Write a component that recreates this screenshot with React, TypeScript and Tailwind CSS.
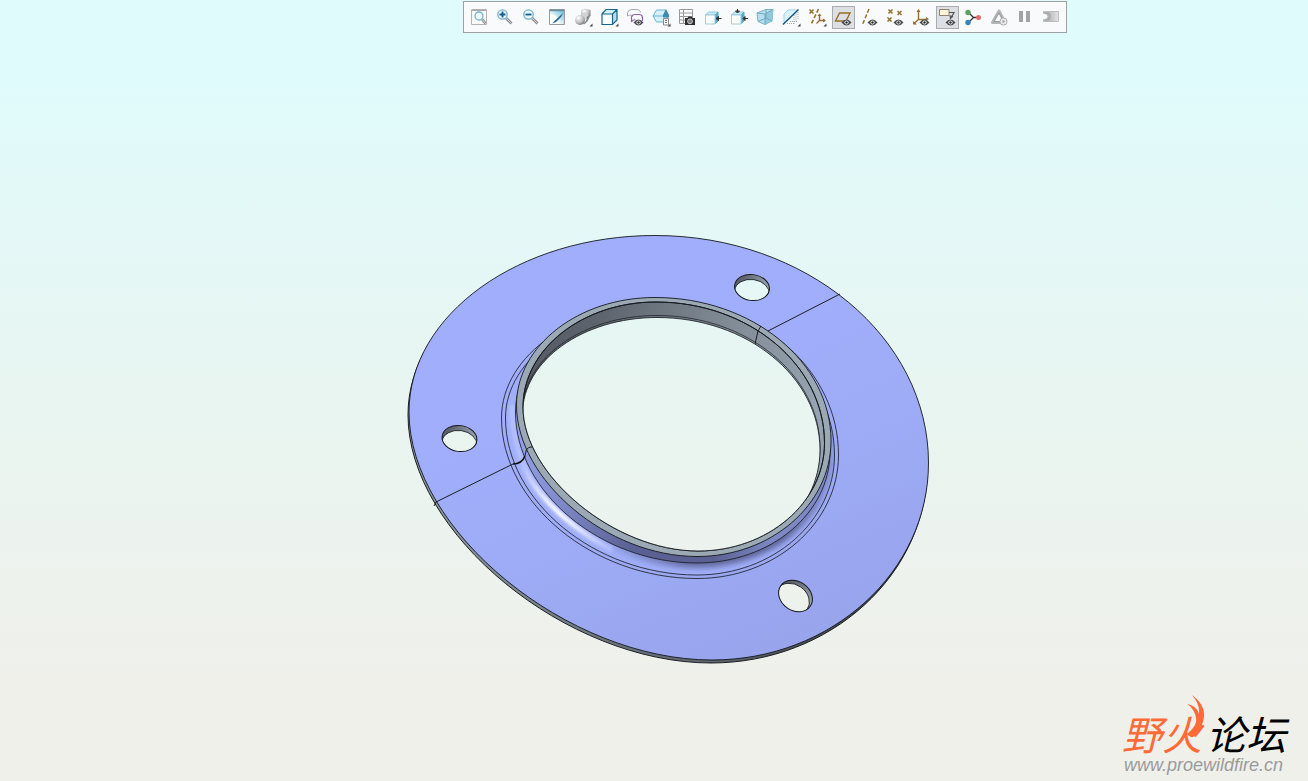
import { ReactNode } from 'react';
import clsx from 'clsx';

type Point = [number, number];

// Closed oval through its four extreme points. `flat` is the handle length
// of the lower left quadrant, the other three are regular quarter arcs.
const oval = (left: Point, top: Point, right: Point, bottom: Point, flat = 0.53) => {
  const k = 0.552;
  const [lx, ly] = left;
  const [tx, ty] = top;
  const [rx, ry] = right;
  const [bx, by] = bottom;
  return [
    `M${lx} ${ly}`,
    `C${lx} ${ly - k * (ly - ty)} ${tx - k * (tx - lx)} ${ty} ${tx} ${ty}`,
    `C${tx + k * (rx - tx)} ${ty} ${rx} ${ry - k * (ry - ty)} ${rx} ${ry}`,
    `C${rx} ${ry + k * (by - ry)} ${bx + k * (rx - bx)} ${by} ${bx} ${by}`,
    `C${bx - flat * (bx - lx)} ${by} ${lx} ${ly + flat * (by - ly)} ${lx} ${ly}Z`,
  ].join('');
};

const flange = oval([409, 412], [655, 235.5], [928.5, 463], [712, 660], 0.477);
const filletOuter = oval([501.5, 418], [668, 303], [838.5, 455], [697, 578.5]);
const filletInner = oval([505.5, 418], [664, 309], [834.5, 455], [697, 575]);
const collar = oval([515.5, 412], [657, 305], [830, 452], [697, 563]);
const rimOuter = oval([516.5, 405], [655, 297.5], [831, 441], [697, 556.5], 0.496);
const rimInner = oval([523, 407], [656, 302], [824.5, 443], [698, 551], 0.475);
const bore = oval([522.5, 414], [657, 317.5], [820, 450], [688, 562]);

const boltHoles = [
  { id: 'bolt-top', cx: 752, cy: 287.5, rx: 17.5, ry: 13, tilt: 8, dx: 0, dy: 5 },
  { id: 'bolt-left', cx: 459.5, cy: 438.5, rx: 17.5, ry: 13, tilt: 8, dx: 0, dy: 5 },
  { id: 'bolt-right', cx: 795.5, cy: 596, rx: 18, ry: 14.5, tilt: 35, dx: -3, dy: 3 },
];

const FlangeModel = () => (
  <svg
    viewBox="364 225 580 450"
    className="h-[450px] w-[580px]"
    role="img"
    aria-label="Flange part"
  >
    <defs>
      <linearGradient id="face" x1="0.3" y1="0.2" x2="0.7" y2="1">
        <stop offset="0" stopColor="#a0aefc" />
        <stop offset="0.4" stopColor="#9fadf9" />
        <stop offset="1" stopColor="#98a4ec" />
      </linearGradient>
      <linearGradient id="wall" x1="0" y1="0" x2="1" y2="0.3">
        <stop offset="0" stopColor="#525861" />
        <stop offset="0.25" stopColor="#5d646d" />
        <stop offset="0.6" stopColor="#7d8791" />
        <stop offset="1" stopColor="#96a3b0" />
      </linearGradient>
      <linearGradient id="side" x1="0" y1="0" x2="1" y2="0.3">
        <stop offset="0" stopColor="#a5b2fb" />
        <stop offset="0.3" stopColor="#8490d2" />
        <stop offset="0.6" stopColor="#5a6192" />
        <stop offset="0.85" stopColor="#5a6192" />
        <stop offset="1" stopColor="#7d88c4" />
      </linearGradient>
      <linearGradient id="edge" x1="0" y1="0" x2="1" y2="0">
        <stop offset="0" stopColor="#8b98a2" />
        <stop offset="0.6" stopColor="#5a626b" />
        <stop offset="1" stopColor="#30353b" />
      </linearGradient>
      <linearGradient id="shade" x1="0" y1="0" x2="1" y2="0">
        <stop offset="0.25" stopColor="#565d8c" stopOpacity="0" />
        <stop offset="0.55" stopColor="#565d8c" stopOpacity="0.9" />
        <stop offset="0.85" stopColor="#565d8c" />
        <stop offset="1" stopColor="#565d8c" stopOpacity="0.4" />
      </linearGradient>
      <linearGradient
        id="glint"
        gradientUnits="userSpaceOnUse"
        x1="522"
        y1="466"
        x2="606"
        y2="548"
      >
        <stop offset="0" stopColor="white" stopOpacity="0" />
        <stop offset="0.35" stopColor="white" stopOpacity="0.8" />
        <stop offset="0.5" stopColor="white" />
        <stop offset="0.65" stopColor="white" stopOpacity="0.8" />
        <stop offset="1" stopColor="white" stopOpacity="0" />
      </linearGradient>
      <filter id="soft" x="-20%" y="-20%" width="140%" height="140%">
        <feGaussianBlur stdDeviation="3" />
      </filter>
      <filter id="softer" x="-20%" y="-20%" width="140%" height="140%">
        <feGaussianBlur stdDeviation="1.6" />
      </filter>
      <clipPath id="fillet-clip">
        <path d={filletInner} />
      </clipPath>
      <clipPath id="rim-clip">
        <path d={rimInner} />
      </clipPath>
      {boltHoles.map((h) => (
        <clipPath id={h.id} key={h.id}>
          <ellipse
            cx={h.cx}
            cy={h.cy}
            rx={h.rx}
            ry={h.ry}
            transform={`rotate(${h.tilt} ${h.cx} ${h.cy})`}
          />
        </clipPath>
      ))}
      <mask id="openings" maskUnits="userSpaceOnUse" x="364" y="225" width="580" height="450">
        <rect x="364" y="225" width="580" height="450" fill="white" />
        <path d={bore} fill="black" clipPath="url(#rim-clip)" />
        {boltHoles.map((h) => (
          <g clipPath={`url(#${h.id})`} key={h.id}>
            <ellipse
              cx={h.cx + h.dx}
              cy={h.cy + h.dy}
              rx={h.rx}
              ry={h.ry}
              transform={`rotate(${h.tilt} ${h.cx + h.dx} ${h.cy + h.dy})`}
            />
          </g>
        ))}
      </mask>
    </defs>
    <g mask="url(#openings)">
      <path d={flange} transform="translate(-1 3)" fill="url(#edge)" stroke="#1b1d20" />
      <path d={flange} fill="url(#face)" stroke="#15171c" strokeWidth="0.9" />
      <g clipPath="url(#fillet-clip)">
        <path d={filletInner} fill="#a1affb" />
        <path d={collar} fill="none" stroke="url(#shade)" strokeWidth="9" filter="url(#soft)" />
        <path
          d="M512 405Q512 450 534 484Q562 524 612 550"
          fill="none"
          stroke="#b4c0ff"
          strokeWidth="5"
          filter="url(#softer)"
        />
        <path
          d="M522 466Q546 512 606 547"
          fill="none"
          stroke="url(#glint)"
          strokeWidth="4"
          filter="url(#softer)"
        />
      </g>
      <path d={filletOuter} fill="none" stroke="#15171c" strokeWidth="0.8" />
      <path d={filletInner} fill="none" stroke="#15171c" strokeWidth="0.8" />
      <path d={collar} fill="url(#side)" stroke="#15171c" strokeWidth="0.8" />
      <path d={rimOuter} fill="#9ba9b5" stroke="#15171c" strokeWidth="0.9" />
      <path d={rimInner} fill="url(#wall)" stroke="#15171c" strokeWidth="0.9" />
      <g clipPath="url(#rim-clip)">
        <path
          d={bore}
          transform="translate(0 -2)"
          fill="none"
          stroke="#23262b"
          strokeWidth="0.8"
        />
      </g>
      <g fill="none" stroke="#0c0d10" strokeWidth="0.9">
        <path d="M434 506L436 502L513 464" />
        <path d="M840 294L768 331M761 326L758 331L755 344" />
        <path d="M513 464C519 464 523 461 525 456" strokeWidth="1.6" />
        <path d="M525 456C526 451 526 447 532 447" />
      </g>
      {boltHoles.map((h) => (
        <ellipse
          key={h.id}
          cx={h.cx}
          cy={h.cy}
          rx={h.rx}
          ry={h.ry}
          transform={`rotate(${h.tilt} ${h.cx} ${h.cy})`}
          fill="url(#wall)"
        />
      ))}
    </g>
    <path d={rimInner} fill="none" stroke="#15171c" strokeWidth="0.9" />
    <g clipPath="url(#rim-clip)">
      <path d={bore} fill="none" stroke="#23262b" strokeWidth="0.9" />
    </g>
    {boltHoles.map((h) => (
      <g key={h.id} fill="none" stroke="#15171c">
        <ellipse
          cx={h.cx}
          cy={h.cy}
          rx={h.rx}
          ry={h.ry}
          transform={`rotate(${h.tilt} ${h.cx} ${h.cy})`}
        />
        <g clipPath={`url(#${h.id})`}>
          <ellipse
            cx={h.cx + h.dx}
            cy={h.cy + h.dy}
            rx={h.rx}
            ry={h.ry}
            transform={`rotate(${h.tilt} ${h.cx + h.dx} ${h.cy + h.dy})`}
            strokeWidth="0.8"
          />
        </g>
      </g>
    ))}
  </svg>
);

const Eye = ({ x = 12.5, y = 14.5 }: { x?: number; y?: number }) => (
  <g transform={`translate(${x} ${y})`}>
    <path d="M-5 0Q-2.5-3 0-3Q2.5-3 5 0Q2.5 3 0 3Q-2.5 3-5 0Z" fill="#4b4b4d" />
    <circle r="2.1" fill="#f4f4f4" />
    <circle r="1.2" fill="#333" />
  </g>
);

const More = () => <path d="M18.5 15.5v3h-3z" fill="#444" />;

const Lens = ({ cx, cy, r }: { cx: number; cy: number; r: number }) => (
  <>
    <path d={`M${cx + r - 1} ${cy + r - 1}L15.5 15.5`} stroke="#8a8d90" strokeWidth="2.8" />
    <path d={`M${cx + r - 1} ${cy + r - 1}L15.5 15.5`} stroke="#d4d7da" />
    <circle cx={cx} cy={cy} r={r} fill="#f2fbff" stroke="#6fb2d0" strokeWidth="1.3" />
  </>
);

const Cross = ({ x, y }: { x: number; y: number }) => (
  <path
    d={`M${x - 2} ${y - 2}l4 4m0-4l-4 4`}
    stroke="#94702c"
    strokeWidth="1.5"
  />
);

const SmallCube = () => (
  <>
    <path d="M1.5 7L4.5 4H14L11 7Z" fill="#c5ebf7" stroke="#8ccbe0" />
    <path d="M11 7L14 4V13L11 16Z" fill="#4faccb" stroke="#5ab0cc" />
    <path d="M1.5 7H11V16H1.5Z" fill="#fafdfe" stroke="#a3cbd9" />
  </>
);

const tools: { label: string; active?: boolean; disabled?: boolean; icon: ReactNode }[] = [
  {
    label: 'Refit',
    icon: (
      <>
        <path d="M1.5 1.5H16.5V16.5H1.5Z" fill="#fdfdfd" stroke="#b3b3b3" />
        <path d="M2 2.5H16" stroke="#a9a9a9" />
        <Lens cx={9} cy={8} r={4} />
      </>
    ),
  },
  {
    label: 'Zoom In',
    icon: (
      <>
        <Lens cx={6.5} cy={6.5} r={4.7} />
        <path d="M6.5 3.5v6M3.5 6.5h6" stroke="#125f8a" strokeWidth="1.9" />
      </>
    ),
  },
  {
    label: 'Zoom Out',
    icon: (
      <>
        <Lens cx={6.5} cy={6.5} r={4.7} />
        <path d="M3.5 6.5h6" stroke="#125f8a" strokeWidth="1.9" />
      </>
    ),
  },
  {
    label: 'Repaint',
    icon: (
      <>
        <path d="M1.5 1.5H16.5V16.5H1.5Z" fill="url(#repaint)" stroke="#999" />
        <path d="M2 7Q7 5 9 10L4 16H2Z" fill="white" />
        <path d="M2 2.5H16" stroke="#5d8fa3" strokeWidth="1.4" />
        <path d="M4 15.5L7 12.5L15 5L13 9L8 14Z" fill="#1f6486" />
      </>
    ),
  },
  {
    label: 'Rendering Options',
    icon: (
      <>
        <path d="M7 2L11 0.5L16.5 2V8L12 9.5L7 8Z" fill="url(#ball)" />
        <circle cx="11" cy="8" r="3.5" fill="#d2d2d2" />
        <circle cx="6" cy="12" r="5" fill="url(#ball)" />
        <path d="M9 15.5Q13 13 13 8.5L16 7.5Q15 13 10 16.5Z" fill="#858585" />
        <More />
      </>
    ),
  },
  {
    label: 'Display Style',
    icon: (
      <>
        <path d="M2 6L6 1.5H17L12.5 6Z" fill="#d6eef7" />
        <path d="M12.5 6L17 1.5V12L12.5 16.5Z" fill="#b4dcec" />
        <path d="M2 6H12.5V16.5H2Z" fill="#fafdfe" />
        <path
          d="M2 6L6 1.5H17V12L12.5 16.5H2ZM2 6H12.5V16.5M12.5 6L17 1.5"
          stroke="#17668c"
          strokeWidth="1.2"
        />
        <More />
      </>
    ),
  },
  {
    label: 'Perspective View',
    icon: (
      <>
        <path d="M1.5 8V5Q2 1.5 6 1.5H11Q14 1.5 14.5 4.5M1.5 8Q6 6 6 9" stroke="#aaa" />
        <path
          d="M5.5 14V9Q6 6.5 9 6.5H13Q16.5 6.5 16.5 10V13M5.5 14Q7 11 9.5 12"
          stroke="#8d5fae"
          strokeWidth="1.2"
        />
        <Eye />
      </>
    ),
  },
  {
    label: 'Saved Orientations',
    icon: (
      <>
        <path d="M1 8L4.5 2H13L16 8L12 14H4.5Z" fill="#d7f0f8" stroke="#69b5d2" />
        <path d="M1 8H12" stroke="#69b5d2" />
        <path d="M14 1L17 7V9.5H11V7Z" fill="#3d8bb0" />
        <path d="M11.5 10.5H16.5V17H11.5Z" fill="white" stroke="#888" />
        <path d="M13 12.5h2M13 14.5h2" stroke="#777" />
        <More />
      </>
    ),
  },
  {
    label: 'View Manager',
    icon: (
      <>
        <path d="M1.5 1.5H14.5V15.5H1.5Z" fill="#fff" stroke="#999" />
        <path d="M1.5 5H14.5M1.5 8.5H14.5M1.5 12H14.5M5.5 1.5V15.5" stroke="#999" />
        <path d="M7 10H9.5L10.5 8.5H13.5L14.5 10H17V17H7Z" fill="#2f2f31" />
        <circle cx="12" cy="13.3" r="2.4" fill="#777" stroke="#eee" strokeWidth="0.8" />
      </>
    ),
  },
  {
    label: 'Drag Left',
    icon: (
      <>
        <SmallCube />
        <path d="M12 10.5L14.5 8.5V12.5ZM14 10.5H17.5" fill="#333" stroke="#333" />
      </>
    ),
  },
  {
    label: 'Drag Down',
    icon: (
      <>
        <SmallCube />
        <path d="M13 10.5L15 8.5V12.5ZM14 10.5H18" fill="#333" stroke="#333" />
        <path d="M7.5 5L5.5 3H9.5ZM7.5 4V1" fill="#333" stroke="#333" />
      </>
    ),
  },
  {
    label: 'Section',
    icon: (
      <>
        <path d="M1 5L10 1.5H17L16 13L9 16.5L2 13.5Z" fill="#b9dfec" stroke="#78b4cb" />
        <path d="M9 6L17 1.5L16 13L9 16.5Z" fill="#93c9de" />
        <path d="M1 5L9 6V16.5M9 6L17 1.5M10 1.5V10L2 13.5M10 10L16 13" stroke="#6caac2" />
      </>
    ),
  },
  {
    label: 'Clipping',
    icon: (
      <>
        <path d="M2 6L6 2H16L11 7L2 15Z" fill="#d9f2fb" stroke="#9fd5ea" />
        <path
          d="M12 7V16M14 5.5V14M16 4V12M5 15.5H12M8 13.5H15"
          stroke="#aaa"
          strokeDasharray="1 1"
        />
        <path d="M1 16.5L16.5 1.5" stroke="#17567a" strokeWidth="1.4" />
        <More />
      </>
    ),
  },
  {
    label: 'Datum Display Filters',
    icon: (
      <>
        <Cross x={3.5} y={3.5} />
        <path d="M10.5 1L3 16.5" stroke="#94702c" strokeWidth="1.6" strokeDasharray="4 2" />
        <path d="M11.5 6.5V12.5H17M11.5 12.5L8.5 15.5" stroke="#94702c" strokeWidth="1.4" />
        <path d="M9.5 8L11.5 5.5L13.5 8ZM15 10.5L18 12.5L15 14.5Z" fill="#94702c" />
        <More />
      </>
    ),
  },
  {
    label: 'Plane Display',
    active: true,
    icon: (
      <>
        <path d="M1.5 13L5.5 5H16L12 13Z" stroke="#94702c" strokeWidth="1.4" />
        <Eye />
      </>
    ),
  },
  {
    label: 'Axis Display',
    icon: (
      <>
        <path d="M9 1L2.5 16.5" stroke="#94702c" strokeWidth="1.5" strokeDasharray="4 2" />
        <Eye />
      </>
    ),
  },
  {
    label: 'Point Display',
    icon: (
      <>
        <Cross x={4.5} y={3.5} />
        <Cross x={13.5} y={5} />
        <Cross x={3.5} y={11.5} />
        <Eye />
      </>
    ),
  },
  {
    label: 'Csys Display',
    icon: (
      <>
        <path d="M6.5 2V11.5H15M6.5 11.5L2 15.5" stroke="#94702c" strokeWidth="1.4" />
        <path d="M4.5 4L6.5 1L8.5 4ZM14 9L17 11L14 13ZM1 13V16.5H5Z" fill="#94702c" />
        <Eye />
      </>
    ),
  },
  {
    label: 'Annotation Display',
    active: true,
    icon: (
      <>
        <path d="M1.5 1.5H11V7.5H1.5Z" fill="#fff3d9" stroke="#8d8370" />
        <path d="M11 4.5H16L13.5 9" stroke="#555" strokeWidth="1.2" />
        <path d="M11.5 7L15.5 8.5L12 11.5Z" fill="#555" />
        <Eye />
      </>
    ),
  },
  {
    label: 'Spin Center',
    icon: (
      <>
        <path d="M4.5 4.5L9.5 9.5L4.5 14.5M9.5 9.5H14" stroke="#333" strokeWidth="1.3" />
        <circle cx="4" cy="4.5" r="2.7" fill="#5c9f62" />
        <circle cx="14.5" cy="9.5" r="2.5" fill="#e56b6b" />
        <circle cx="4" cy="14.5" r="2.7" fill="#3c86b5" />
      </>
    ),
  },
  {
    label: 'Simulate',
    disabled: true,
    icon: (
      <>
        <path d="M9 3L15 14.5H2.5Z" stroke="#b5b5b5" strokeWidth="3" strokeLinejoin="round" />
        <path d="M9 4.5L13.5 13.5H4Z" stroke="#8f8f8f" strokeWidth="0.6" />
        <circle cx="13.5" cy="13.5" r="3.6" fill="#eee" stroke="#aaa" />
        <path d="M12.5 11.5L15.5 13.5L12.5 15.5Z" fill="#aaa" />
      </>
    ),
  },
  {
    label: 'Pause',
    disabled: true,
    icon: <path d="M3 3H7V14H3ZM10 3H14V14H10Z" fill="#a3a3a3" />,
  },
  {
    label: 'Results',
    disabled: true,
    icon: (
      <>
        <path
          d="M1.5 3.5H16.5V13.5H1.5V11.5H3Q6 11 6 8.5Q6 6 3 5.5H1.5Z"
          fill="url(#results)"
          stroke="#bdbdbd"
        />
        <path d="M3 5Q8 5 8 8.5Q8 12 3 12" stroke="#a5a5a5" strokeWidth="1.2" />
      </>
    ),
  },
];

const Toolbar = () => (
  <div
    role="toolbar"
    aria-label="Graphics"
    className="flex gap-[3px] border border-[#a0a0a0] bg-[#f9fafb] pt-1 pr-[3px] pb-[3px] pl-1"
  >
    <svg className="absolute h-0 w-0" aria-hidden="true">
      <defs>
        <linearGradient id="repaint" x1="0" y1="1" x2="1" y2="0">
          <stop offset="0.3" stopColor="#ffffff" />
          <stop offset="1" stopColor="#5cb6d4" />
        </linearGradient>
        <radialGradient id="ball" cx="0.35" cy="0.3" r="0.8">
          <stop offset="0" stopColor="#ffffff" />
          <stop offset="0.6" stopColor="#bdbdbd" />
          <stop offset="1" stopColor="#6b6b6b" />
        </radialGradient>
        <linearGradient id="results" x1="0" y1="0" x2="1" y2="0">
          <stop offset="0.3" stopColor="#b4b4b4" />
          <stop offset="1" stopColor="#e6e6e6" />
        </linearGradient>
      </defs>
    </svg>
    {tools.map((tool) => (
      <button
        type="button"
        key={tool.label}
        aria-label={tool.label}
        aria-pressed={tool.active}
        disabled={tool.disabled}
        className={clsx(
          'h-[23px] w-[23px] shrink-0',
          tool.active && 'bg-[#dcdfe3] outline -outline-offset-1 outline-[#a9abad]'
        )}
      >
        <svg viewBox="-2 -2 23 23" className="block h-[23px] w-[23px]" fill="none">
          {tool.icon}
        </svg>
      </button>
    ))}
  </div>
);

const Watermark = () => (
  <div className="w-[186px]">
    <div className="relative flex h-11 items-center gap-1 font-['Noto_Sans_CJK_SC',sans-serif] text-[40px] leading-[44px] whitespace-nowrap italic">
      <span className="text-[#ff6a36]">野火</span>
      <span className="text-black">论坛</span>
      <svg
        viewBox="0 0 20 44"
        className="absolute -top-4 left-[64px] h-11 w-5"
        aria-hidden="true"
      >
        <path
          d="M6 0C14 6 19 13 18 22C17 31 12 36 7 42Q4 43 1 39C7 34 11 29 10 23C9 17 6 12 1 9C7 10 12 14 13 19C14 11 10 5 6 0Z"
          fill="#ff6a36"
        />
      </svg>
    </div>
    <p className="pl-[2px] font-['Liberation_Sans',Arial,sans-serif] text-lg leading-5 text-[#999b9b] italic">
      www.proewildfire.cn
    </p>
  </div>
);

export default function App() {
  return (
    <main className="flex min-h-screen flex-col bg-linear-to-b from-[#e0fbfc] from-10% via-[#e8f5f1] via-50% to-[#f0f0ea] to-90%">
      <header className="flex pt-px pl-[463px]">
        <Toolbar />
      </header>
      <section className="flex grow items-end justify-center">
        <FlangeModel />
      </section>
      <footer className="flex justify-end pt-9 pb-[6px]">
        <Watermark />
      </footer>
    </main>
  );
}
